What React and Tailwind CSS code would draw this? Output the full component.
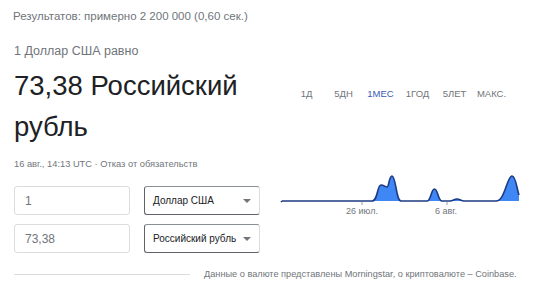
import React from 'react';

const tabs = ['1Д', '5ДН', '1МЕС', '1ГОД', '5ЛЕТ', 'МАКС.'];

const Chart = () => {
  const area =
    'M12 61 L102 61 C108 61 107 45 111 45 C114 45 115 47 117 47 C119 47 119 36 122 36 C126 36 126 61 131 61 L157 61 C161 61 161 49 164.5 49 C168 49 168 61 172 61 L180 61 C183 61 184 59 187 59 C190 59 191 61 194 61 L226 61 C235 61 237 36 242 36 C246 36 247 50 249 55';
  return (
    <svg width="260" height="80" viewBox="0 0 260 80" className="block">
      <path d={area + ' L249 61 Z'} fill="#3f87f5" />
      <path d={area} fill="none" stroke="#1c3b84" strokeWidth="1.6" strokeLinejoin="round" />
      <path d="M11 62 L12 61" stroke="#1c3b84" strokeWidth="1.6" />
      <line x1="92" y1="62" x2="92" y2="65" stroke="#9aa0a6" strokeWidth="1" />
      <line x1="177" y1="62" x2="177" y2="65" stroke="#9aa0a6" strokeWidth="1" />
      <text x="92" y="74" textAnchor="middle" fontSize="9" fill="#70757a" fontFamily="Liberation Sans, Arial, sans-serif">
        26 июл.
      </text>
      <text x="176" y="74" textAnchor="middle" fontSize="9" fill="#70757a" fontFamily="Liberation Sans, Arial, sans-serif">
        6 авг.
      </text>
    </svg>
  );
};

const Select = ({ label }) => (
  <div className="w-[116px] h-[29px] flex items-center justify-between rounded-[3px] border border-[#dadce0] border-l-[#5f6368] border-t-[#8a8f94] border-b-[#5f6368] pl-[8px] pr-[8px] bg-white">
    <span className="text-[10px] text-[#202124] whitespace-nowrap">{label}</span>
    <svg width="8" height="4" viewBox="0 0 8 4">
      <path d="M0 0 L8 0 L4 4 Z" fill="#70757a" />
    </svg>
  </div>
);

const Field = ({ value }) => (
  <div className="w-[116px] h-[29px] flex items-center rounded-[3px] border border-[#dadce0] px-[10px] bg-white">
    <span className="text-[12px] text-[#70757a]">{value}</span>
  </div>
);

export default function App() {
  return (
    <div className="w-[545px] h-[307px] bg-white overflow-hidden font-['Liberation_Sans',Arial,sans-serif]">
      <div className="pl-[13px] pt-[9px] text-[11.5px] leading-[14px] text-[#70757a]">
        Результатов: примерно 2 200 000 (0,60 сек.)
      </div>

      <div className="flex">
        <div className="w-[270px] pl-[14px]">
          <div className="mt-[20px] text-[12.5px] leading-[16px] text-[#70757a]">1 Доллар США равно</div>
          <div className="mt-[6px] text-[27.5px] leading-[41px] text-[#202124]">
            73,38 Российский
            <br />
            рубль
          </div>
          <div className="mt-[11px] text-[9.3px] leading-[12px] text-[#70757a]">
            16 авг., 14:13 UTC · Отказ от обязательств
          </div>
          <div className="mt-[16px] flex flex-col gap-[9px]">
            <div className="flex gap-[14px]">
              <Field value="1" />
              <Select label="Доллар США" />
            </div>
            <div className="flex gap-[14px]">
              <Field value="73,38" />
              <Select label="Российский рубль" />
            </div>
          </div>
        </div>

        <div className="flex flex-col">
          <div className="mt-[65px] ml-[18px] flex text-[9.5px] leading-[12px] text-[#70757a]">
            {tabs.map((t) => (
              <div key={t} className={`w-[37px] text-center ${t === '1МЕС' ? 'text-[#3b5bb0]' : ''}`}>
                {t}
              </div>
            ))}
          </div>
          <div className="mt-[40px]">
            <Chart />
          </div>
        </div>
      </div>

      <div className="flex items-center pl-[14px] mt-[15px]">
        <div className="w-[176px] h-px bg-[#dadce0]" />
        <div className="ml-[14px] text-[9.2px] text-[#70757a] whitespace-nowrap">
          Данные о валюте представлены Morningstar, о криптовалюте – Coinbase.
        </div>
      </div>
    </div>
  );
}
